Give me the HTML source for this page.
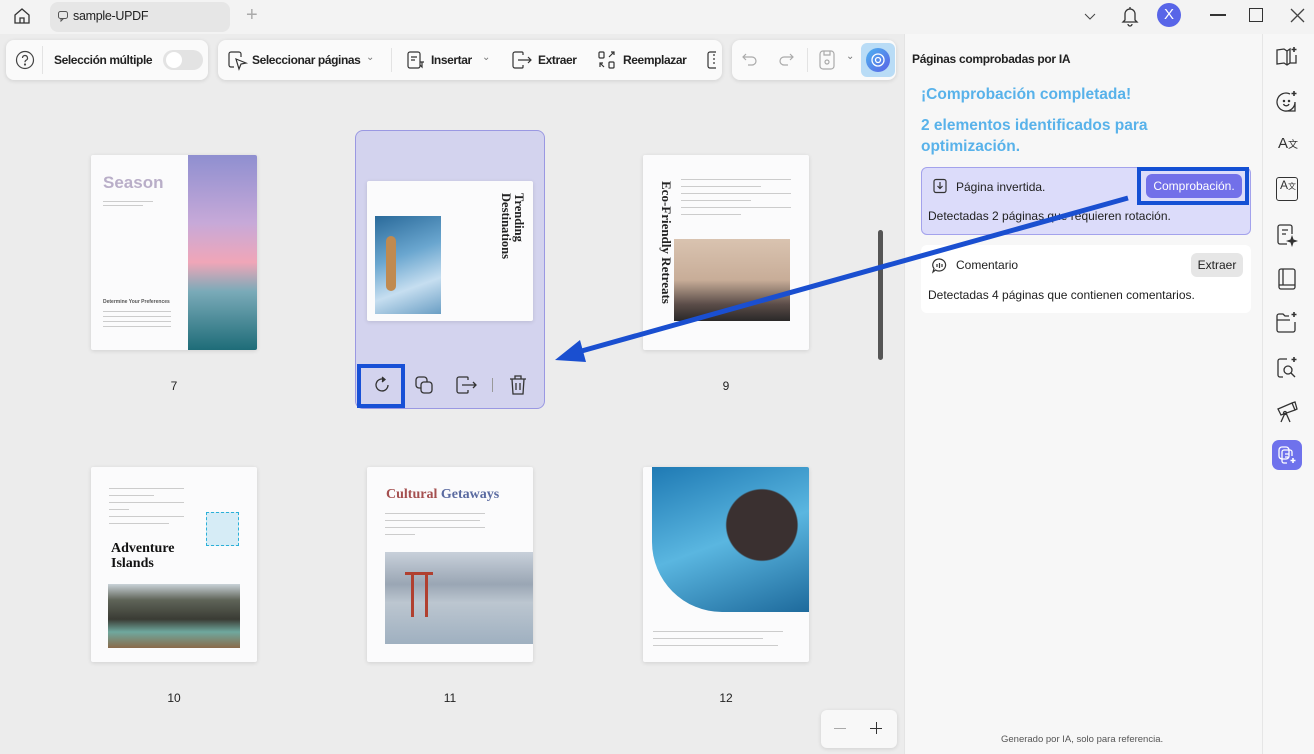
<!DOCTYPE html>
<html><head><meta charset="utf-8"><style>
*{box-sizing:border-box;margin:0;padding:0}
body{width:1314px;height:754px;overflow:hidden;background:#f3f3f3;font-family:"Liberation Sans",sans-serif;position:relative;color:#222}
.a{position:absolute}
.grp{position:absolute;background:#fafafa;border-radius:8px;box-shadow:0 1px 4px rgba(0,0,0,.12);top:40px;height:40px}
.t{position:absolute;font-size:12px;letter-spacing:-0.4px;font-weight:bold;color:#222;top:13px;white-space:nowrap}
.page{position:absolute;background:#fbfbfc;box-shadow:0 1px 4px rgba(0,0,0,.12);border-radius:2px;overflow:hidden}
.num{position:absolute;font-size:12px;color:#222;width:40px;text-align:center}
.lines{position:absolute;height:2px;background:#ccc}
.ic{position:absolute;left:1275px;width:24px;height:24px}
</style></head><body>
<!-- title bar -->
<svg class="a" style="left:12px;top:6px" width="20" height="20" viewBox="0 0 20 20" fill="none" stroke="#333" stroke-width="1.3"><path d="M3 9 L10 3 L17 9 V17 H3 Z"/><path d="M8 17 V12 H12 V17"/></svg>
<div class="a" style="left:50px;top:2px;width:180px;height:30px;background:#e6e6e6;border-radius:8px"></div>
<svg class="a" style="left:57px;top:10px" width="12" height="12" viewBox="0 0 12 12" fill="none" stroke="#555"><rect x="1.5" y="1.5" width="9" height="7" rx="2"/><path d="M4 8.5 L4 11 L6.5 8.5"/></svg>
<div class="a" style="left:73px;top:9px;font-size:12.5px;letter-spacing:-0.3px;color:#222">sample-UPDF</div>
<div class="a" style="left:246px;top:4px;font-size:20px;color:#aaa;font-weight:300">+</div>
<svg class="a" style="left:1083px;top:9px" width="14" height="14" viewBox="0 0 14 14" fill="none" stroke="#444"><path d="M2 5 L7 10 L12 5"/></svg>
<svg class="a" style="left:1120px;top:5px" width="20" height="22" viewBox="0 0 20 22" fill="none" stroke="#333" stroke-width="1.3"><path d="M5 15 V9 a5 5 0 0 1 10 0 V15 L17 17 H3 Z"/><path d="M8 19 a2 2 0 0 0 4 0"/><path d="M10 2 V4"/></svg>
<div class="a" style="left:1157px;top:3px;width:24px;height:24px;border-radius:50%;background:#5865e8;color:#fff;font-size:15px;text-align:center;line-height:24px">X</div>
<div class="a" style="left:1210px;top:14px;width:16px;height:1.5px;background:#333"></div>
<div class="a" style="left:1249px;top:8px;width:14px;height:14px;border:1.5px solid #333"></div>
<svg class="a" style="left:1290px;top:8px" width="15" height="15" viewBox="0 0 15 15" stroke="#444" stroke-width="1.3"><path d="M1 1 L14 14 M14 1 L1 14"/></svg>
<!-- main bg -->
<div class="a" style="left:0;top:34px;width:904px;height:720px;background:#ececec"></div>
<!-- toolbars -->
<div class="grp" style="left:6px;width:202px">
 <svg class="a" style="left:9px;top:10px" width="20" height="20" viewBox="0 0 20 20" fill="none" stroke="#444" stroke-width="1.2"><circle cx="10" cy="10" r="8.5"/><path d="M7.5 8 a2.5 2.5 0 1 1 3.5 2.3 c-1 .5 -1 1 -1 2"/><circle cx="10" cy="14.5" r=".5"/></svg>
 <div class="a" style="left:36px;top:6px;width:1px;height:28px;background:#e3e3e3"></div>
 <div class="t" style="left:48px">Selección múltiple</div>
 <div class="a" style="left:157px;top:10px;width:40px;height:20px;border-radius:10px;background:#e3e3e3"></div>
 <div class="a" style="left:160px;top:12px;width:16px;height:16px;border-radius:50%;background:#fff"></div>
</div>
<div class="grp" style="left:218px;width:504px">
 <svg class="a" style="left:9px;top:10px" width="22" height="22" viewBox="0 0 22 22" fill="none" stroke="#333" stroke-width="1.2"><path d="M7 17 H4 a2 2 0 0 1 -2 -2 V4 a2 2 0 0 1 2 -2 H12 a2 2 0 0 1 2 2 V7"/><path d="M9 9 L19 13 L14 14 L12 19 Z"/></svg>
 <div class="t" style="left:34px">Seleccionar páginas</div>
 <div class="a" style="left:148px;top:12px;font-size:10px;color:#777">⌄</div>
 <div class="a" style="left:173px;top:8px;width:1px;height:24px;background:#e3e3e3"></div>
 <svg class="a" style="left:188px;top:10px" width="20" height="20" viewBox="0 0 20 20" fill="none" stroke="#333" stroke-width="1.2"><rect x="2" y="2" width="12" height="16" rx="2"/><path d="M5 7 H11 M5 10 H9 M14 12 H18 M16 12 V17 L14 15"/></svg>
 <div class="t" style="left:213px">Insertar</div>
 <div class="a" style="left:264px;top:12px;font-size:10px;color:#777">⌄</div>
 <svg class="a" style="left:293px;top:10px" width="22" height="20" viewBox="0 0 22 20" fill="none" stroke="#333" stroke-width="1.2"><path d="M12 5 V3 a1 1 0 0 0 -1 -1 H4 a2 2 0 0 0 -2 2 V16 a2 2 0 0 0 2 2 H11 a1 1 0 0 0 1 -1 V15"/><path d="M7 10 H20 M17 7 L20 10 L17 13"/></svg>
 <div class="t" style="left:320px">Extraer</div>
 <svg class="a" style="left:379px;top:10px" width="20" height="20" viewBox="0 0 20 20" fill="none" stroke="#333" stroke-width="1.2"><rect x="2" y="2" width="5" height="6" rx="1"/><rect x="12" y="12" width="5" height="6" rx="1"/><path d="M12 7 L17 2 M14 2 H17 V5 M3 13 L7 17 M3 17 V13 H6"/></svg>
 <div class="t" style="left:405px">Reemplazar</div>
 <svg class="a" style="left:488px;top:10px" width="12" height="20" viewBox="0 0 12 20" fill="none" stroke="#333" stroke-width="1.2"><path d="M10 2 H4 a2 2 0 0 0 -2 2 V16 a2 2 0 0 0 2 2 H10"/><path d="M8 4 V16" stroke-dasharray="2 2"/></svg>
</div>
<div class="grp" style="left:732px;width:164px">
 <svg class="a" style="left:10px;top:12px" width="16" height="16" viewBox="0 0 16 16" fill="none" stroke="#aaa" stroke-width="1.2"><path d="M4 2 L1 5 L4 8 M1 5 H10 a4 4 0 0 1 0 8 H6"/></svg>
 <svg class="a" style="left:46px;top:12px" width="16" height="16" viewBox="0 0 16 16" fill="none" stroke="#aaa" stroke-width="1.2"><path d="M12 2 L15 5 L12 8 M15 5 H6 a4 4 0 0 0 0 8 H10"/></svg>
 <div class="a" style="left:75px;top:8px;width:1px;height:24px;background:#e3e3e3"></div>
 <svg class="a" style="left:87px;top:10px" width="16" height="20" viewBox="0 0 16 20" fill="none" stroke="#aaa" stroke-width="1.2"><rect x="1" y="1" width="14" height="18" rx="3"/><path d="M5 1 V5 H11 V1"/><circle cx="8" cy="12" r="2"/></svg>
 <div class="a" style="left:114px;top:11px;font-size:10px;color:#777">⌄</div>
 <div class="a" style="left:129px;top:3px;width:34px;height:34px;border-radius:6px;background:#b9dcf6"></div>
 <div class="a" style="left:134px;top:8px;width:24px;height:24px;border-radius:50%;background:linear-gradient(135deg,#4fb3f0,#5a62e6)"></div>
 <svg class="a" style="left:136px;top:10px" width="20" height="20" viewBox="0 0 20 20" fill="none" stroke="#fff" stroke-width="1.3"><circle cx="10" cy="10" r="6"/><circle cx="10" cy="10" r="2.5"/></svg>
</div>
<!-- scrollbar -->
<div class="a" style="left:878px;top:230px;width:5px;height:130px;border-radius:3px;background:#555"></div>
<!-- page 7 -->
<div class="page" style="left:91px;top:155px;width:166px;height:195px">
 <div class="a" style="left:12px;top:18px;font-size:17px;font-weight:bold;color:#b9aec8">Season</div>
 <div class="lines" style="left:12px;top:46px;width:50px;height:1px"></div>
 <div class="lines" style="left:12px;top:50px;width:40px;height:1px"></div>
 <div class="a" style="left:12px;top:144px;font-size:5px;font-weight:bold;color:#555">Determine Your Preferences</div>
 <div class="lines" style="left:12px;top:156px;width:68px;height:1px"></div>
 <div class="lines" style="left:12px;top:161px;width:68px;height:1px"></div>
 <div class="lines" style="left:12px;top:166px;width:68px;height:1px"></div>
 <div class="lines" style="left:12px;top:171px;width:68px;height:1px"></div>
 <div class="a" style="left:97px;top:0;width:69px;height:195px;background:linear-gradient(180deg,#8f8fd0 0%,#c7a9d8 35%,#f0a6b8 55%,#7aaab8 70%,#1e6c78 100%)"></div>
</div>
<div class="num" style="left:154px;top:379px">7</div>
<!-- selected page 8 -->
<div class="a" style="left:355px;top:130px;width:190px;height:279px;background:#d3d3ee;border:1.5px solid #9a98e2;border-radius:8px"></div>
<div class="page" style="left:367px;top:181px;width:166px;height:140px">
 <div class="a" style="left:8px;top:35px;width:66px;height:98px;background:linear-gradient(160deg,#2a6a9a,#6aa6cf 40%,#c6def0 70%,#6a9ec4)"></div>
 <div class="a" style="left:19px;top:55px;width:10px;height:55px;background:#c08a50;border-radius:5px"></div>
 <div class="a" style="left:158px;top:12px;transform:rotate(90deg);transform-origin:0 0;font-family:'Liberation Serif',serif;font-weight:bold;font-size:12.5px;line-height:13px;width:80px;color:#222">Trending Destinations</div>
</div>
<div class="a" style="left:357px;top:364px;width:48px;height:44px;border:4px solid #1850d6"></div>
<svg class="a" style="left:372px;top:375px" width="20" height="20" viewBox="0 0 20 20" fill="none" stroke="#333" stroke-width="1.3"><path d="M16 10 a6 6 0 1 1 -4 -5.7"/><path d="M10 2 L13 4.5 L10 7" fill="#333"/></svg>
<svg class="a" style="left:414px;top:375px" width="20" height="20" viewBox="0 0 20 20" fill="none" stroke="#333" stroke-width="1.3"><rect x="2" y="2" width="11" height="11" rx="3"/><rect x="7" y="7" width="11" height="11" rx="3" fill="#d3d3ee"/></svg>
<svg class="a" style="left:455px;top:375px" width="24" height="20" viewBox="0 0 24 20" fill="none" stroke="#333" stroke-width="1.3"><path d="M13 5 V3 a1 1 0 0 0 -1 -1 H4 a2 2 0 0 0 -2 2 V16 a2 2 0 0 0 2 2 H12 a1 1 0 0 0 1 -1 V15"/><path d="M7 10 H21 M18 7 L21 10 L18 13"/></svg>
<div class="a" style="left:492px;top:378px;width:1px;height:14px;background:#999"></div>
<svg class="a" style="left:508px;top:374px" width="20" height="22" viewBox="0 0 20 22" fill="none" stroke="#333" stroke-width="1.3"><path d="M2 5 H18 M7 5 V2 H13 V5 M4 5 L5 20 H15 L16 5 M8 9 V16 M12 9 V16"/></svg>
<!-- page 9 -->
<div class="page" style="left:643px;top:155px;width:166px;height:195px">
 <div class="a" style="left:31px;top:26px;transform:rotate(90deg);transform-origin:0 0;font-family:'Liberation Serif',serif;font-weight:bold;font-size:13px;white-space:nowrap;color:#222">Eco-Friendly Retreats</div>
 <div class="lines" style="left:38px;top:24px;width:110px;height:1px"></div>
 <div class="lines" style="left:38px;top:31px;width:80px;height:1px"></div>
 <div class="lines" style="left:38px;top:38px;width:110px;height:1px"></div>
 <div class="lines" style="left:38px;top:45px;width:70px;height:1px"></div>
 <div class="lines" style="left:38px;top:52px;width:110px;height:1px"></div>
 <div class="lines" style="left:38px;top:59px;width:60px;height:1px"></div>
 <div class="a" style="left:31px;top:84px;width:116px;height:82px;background:linear-gradient(180deg,#d9c3b0 0%,#c8ad98 50%,#5a4c48 80%,#2a2828 100%)"></div>
</div>
<div class="num" style="left:706px;top:379px">9</div>
<!-- row 2 -->
<div class="page" style="left:91px;top:467px;width:166px;height:195px">
 <div class="lines" style="left:18px;top:21px;width:75px;height:1px"></div>
 <div class="lines" style="left:18px;top:28px;width:45px;height:1px"></div>
 <div class="lines" style="left:18px;top:35px;width:75px;height:1px"></div>
 <div class="lines" style="left:18px;top:42px;width:20px;height:1px"></div>
 <div class="lines" style="left:18px;top:49px;width:75px;height:1px"></div>
 <div class="lines" style="left:18px;top:56px;width:60px;height:1px"></div>
 <div class="a" style="left:115px;top:45px;width:33px;height:34px;background:#d6ecf6;border:1.5px dashed #2bb0d8"></div>
 <div class="a" style="left:20px;top:74px;font-family:'Liberation Serif',serif;font-weight:bold;font-size:14px;line-height:15px;color:#111">Adventure<br>Islands</div>
 <div class="a" style="left:17px;top:117px;width:132px;height:64px;background:linear-gradient(180deg,#c9d2d8 0%,#5f6458 25%,#3a3b34 55%,#6fa89e 75%,#8a6a4a 100%)"></div>
</div>
<div class="num" style="left:154px;top:691px">10</div>
<div class="page" style="left:367px;top:467px;width:166px;height:195px">
 <div class="a" style="left:19px;top:20px;font-family:'Liberation Serif',serif;font-weight:bold;font-size:14px;color:#a55050;white-space:nowrap">Cultural <span style="color:#5a6aa0">Getaways</span></div>
 <div class="lines" style="left:18px;top:46px;width:100px;height:1px"></div>
 <div class="lines" style="left:18px;top:53px;width:95px;height:1px"></div>
 <div class="lines" style="left:18px;top:60px;width:100px;height:1px"></div>
 <div class="lines" style="left:18px;top:67px;width:30px;height:1px"></div>
 <div class="a" style="left:18px;top:85px;width:148px;height:92px;background:linear-gradient(180deg,#c8d0da 0%,#9aa6b4 35%,#bcc6d0 55%,#9fb0c0 100%)"></div>
 <div class="a" style="left:38px;top:105px;width:28px;height:3px;background:#b04030"></div>
 <div class="a" style="left:44px;top:108px;width:3px;height:42px;background:#b04030"></div>
 <div class="a" style="left:58px;top:108px;width:3px;height:42px;background:#b04030"></div>
</div>
<div class="num" style="left:430px;top:691px">11</div>
<div class="page" style="left:643px;top:467px;width:166px;height:195px">
 <div class="a" style="left:9px;top:0;width:157px;height:145px;background:radial-gradient(circle at 70% 40%,#3a3030 0 25%,transparent 26%),linear-gradient(160deg,#1f7ab4,#5ab6e0 50%,#1e6a9c);border-radius:0 0 0 70px"></div>
 <div class="lines" style="left:10px;top:164px;width:130px;height:1px"></div>
 <div class="lines" style="left:10px;top:171px;width:110px;height:1px"></div>
 <div class="lines" style="left:10px;top:178px;width:125px;height:1px"></div>
</div>
<div class="num" style="left:706px;top:691px">12</div>
<!-- zoom control -->
<div class="a" style="left:821px;top:710px;width:76px;height:38px;background:#f8f8f8;border-radius:6px;box-shadow:0 1px 4px rgba(0,0,0,.12)"></div>
<div class="a" style="left:834px;top:728px;width:12px;height:1.3px;background:#aaa"></div>
<div class="a" style="left:870px;top:728px;width:12px;height:1.3px;background:#333"></div>
<div class="a" style="left:875.5px;top:722px;width:1.3px;height:12px;background:#333"></div>
<!-- right panel -->
<div class="a" style="left:904px;top:34px;width:410px;height:720px;background:#f7f7f7;border-left:1px solid #e4e4e4"></div>
<div class="a" style="left:1262px;top:34px;width:1px;height:720px;background:#e6e6e6"></div>
<div class="a" style="left:912px;top:52px;font-size:12px;letter-spacing:-0.3px;font-weight:bold;color:#222">Páginas comprobadas por IA</div>
<div class="a" style="left:921px;top:86px;font-size:15.5px;font-weight:bold;color:#58b2ea">¡Comprobación completada!</div>
<div class="a" style="left:921px;top:115px;font-size:15.5px;font-weight:bold;color:#58b2ea;line-height:21px;width:260px">2 elementos identificados para optimización.</div>
<div class="a" style="left:921px;top:167px;width:330px;height:68px;background:#dcdcfa;border:1.5px solid #a3a2ec;border-radius:6px"></div>
<svg class="a" style="left:932px;top:178px" width="16" height="16" viewBox="0 0 16 16" fill="none" stroke="#333" stroke-width="1.2"><rect x="2" y="1.5" width="12" height="13" rx="2"/><path d="M8 4 V10 M5.5 8 L8 10.5 L10.5 8"/></svg>
<div class="a" style="left:956px;top:180px;font-size:12px;color:#222">Página invertida.</div>
<div class="a" style="left:928px;top:209px;font-size:12px;color:#222">Detectadas 2 páginas que requieren rotación.</div>
<div class="a" style="left:1137px;top:167px;width:112px;height:38px;border:4px solid #1450d4"></div>
<div class="a" style="left:1146px;top:174px;width:96px;height:24px;background:#7270e9;border-radius:6px;color:#fff;font-size:12px;text-align:center;line-height:24px">Comprobación.</div>
<div class="a" style="left:921px;top:245px;width:330px;height:68px;background:#fff;border-radius:6px"></div>
<svg class="a" style="left:931px;top:257px" width="17" height="17" viewBox="0 0 17 17" fill="none" stroke="#333" stroke-width="1.2"><path d="M8.5 2 a6.5 6 0 1 1 -4 11 L2 15 L3 11.5 a6.5 6 0 0 1 5.5 -9.5Z"/><path d="M6 7 V10 M8.5 6 V11 M11 7 V10"/></svg>
<div class="a" style="left:956px;top:258px;font-size:12px;color:#222">Comentario</div>
<div class="a" style="left:1191px;top:253px;width:52px;height:24px;background:#e6e6e6;border-radius:6px;font-size:12px;text-align:center;line-height:24px;color:#222">Extraer</div>
<div class="a" style="left:928px;top:288px;font-size:12px;color:#222">Detectadas 4 páginas que contienen comentarios.</div>
<div class="a" style="left:1001px;top:734px;font-size:9.5px;color:#555">Generado por IA, solo para referencia.</div>
<!-- side icons -->
<svg class="ic" style="top:45px" viewBox="0 0 24 24" fill="none" stroke="#333" stroke-width="1.3"><path d="M2 5 L9 4 L12 6 L15 4 V18 L12 20 L9 18 L2 19 Z M12 6 V20 M15 18 H21 V10"/><path d="M19 2 V7 M16.5 4.5 H21.5" stroke-width="1.6"/></svg>
<svg class="ic" style="top:90px" viewBox="0 0 24 24" fill="none" stroke="#333" stroke-width="1.3"><path d="M15 4 a9 9 0 1 0 5 8 V21 H12"/><circle cx="9" cy="11" r=".6"/><circle cx="14" cy="11" r=".6"/><path d="M8.5 14 a3 3 0 0 0 5.5 0"/><path d="M19 1 V6 M16.5 3.5 H21.5" stroke-width="1.6"/></svg>
<div class="a" style="left:1278px;top:135px;font-size:15px;color:#333">A<span style="font-size:10px;font-family:'Noto Sans CJK SC',sans-serif">文</span></div>
<div class="a" style="left:1276px;top:177px;width:22px;height:24px;border:1.3px solid #333;border-radius:3px;font-size:12px;padding-left:3px;color:#333">A<span style="font-size:8px;font-family:'Noto Sans CJK SC',sans-serif">文</span></div>
<svg class="ic" style="top:223px" viewBox="0 0 24 24" fill="none" stroke="#333" stroke-width="1.3"><path d="M12 21 H5 a2 2 0 0 1 -2 -2 V4 a2 2 0 0 1 2 -2 H15 a2 2 0 0 1 2 2 V11"/><path d="M7 7 H13 M7 11 H11"/><path d="M17 14 L18 17 L21 18 L18 19 L17 22 L16 19 L13 18 L16 17Z" fill="#333"/></svg>
<svg class="ic" style="top:267px" viewBox="0 0 24 24" fill="none" stroke="#333" stroke-width="1.3"><rect x="4" y="2" width="16" height="20" rx="2"/><path d="M8 2 V18 M4 18 H20"/></svg>
<svg class="ic" style="top:311px" viewBox="0 0 24 24" fill="none" stroke="#333" stroke-width="1.3"><path d="M14 5 H10 L8 3 H4 a2 2 0 0 0 -2 2 V19 a2 2 0 0 0 2 2 H18 a2 2 0 0 0 2 -2 V11 M2 9 H15"/><path d="M19 1 V6 M16.5 3.5 H21.5" stroke-width="1.6"/></svg>
<svg class="ic" style="top:356px" viewBox="0 0 24 24" fill="none" stroke="#333" stroke-width="1.3"><path d="M12 3 H5 a2 2 0 0 0 -2 2 V19 a2 2 0 0 0 2 2 H8"/><circle cx="13" cy="14" r="4"/><path d="M16 17 L20 21"/><path d="M19 1 V6 M16.5 3.5 H21.5" stroke-width="1.6"/></svg>
<svg class="ic" style="top:400px" viewBox="0 0 24 24" fill="none" stroke="#333" stroke-width="1.3"><path d="M3 9 L17 3 L20 10 L6 15 Z M17 3 L20 2 L22 9 L20 10"/><path d="M10 13 L6 22 M11 13 L15 22"/><circle cx="10" cy="13" r="1.5"/></svg>
<div class="a" style="left:1272px;top:440px;width:30px;height:30px;border-radius:7px;background:#6f72ec"></div>
<svg class="a" style="left:1277px;top:445px" width="20" height="20" viewBox="0 0 20 20" fill="none" stroke="#fff" stroke-width="1.3"><rect x="2" y="2" width="10" height="12" rx="3"/><path d="M10 18 H7 a2 2 0 0 1 -2 -2 V7 a2 2 0 0 1 2 -2 H13 a2 2 0 0 1 2 2 V11 M8 9 H12 M8 12 H11"/><path d="M16 13 V18 M13.5 15.5 H18.5" stroke-width="1.6"/></svg>
<!-- arrow -->
<svg class="a" style="left:0;top:0;pointer-events:none" width="1314" height="754"><line x1="1128" y1="198" x2="578" y2="352" stroke="#1a4fd0" stroke-width="5"/><path d="M555 360 L580 340 L586 362 Z" fill="#1a4fd0"/></svg>
</body></html>
